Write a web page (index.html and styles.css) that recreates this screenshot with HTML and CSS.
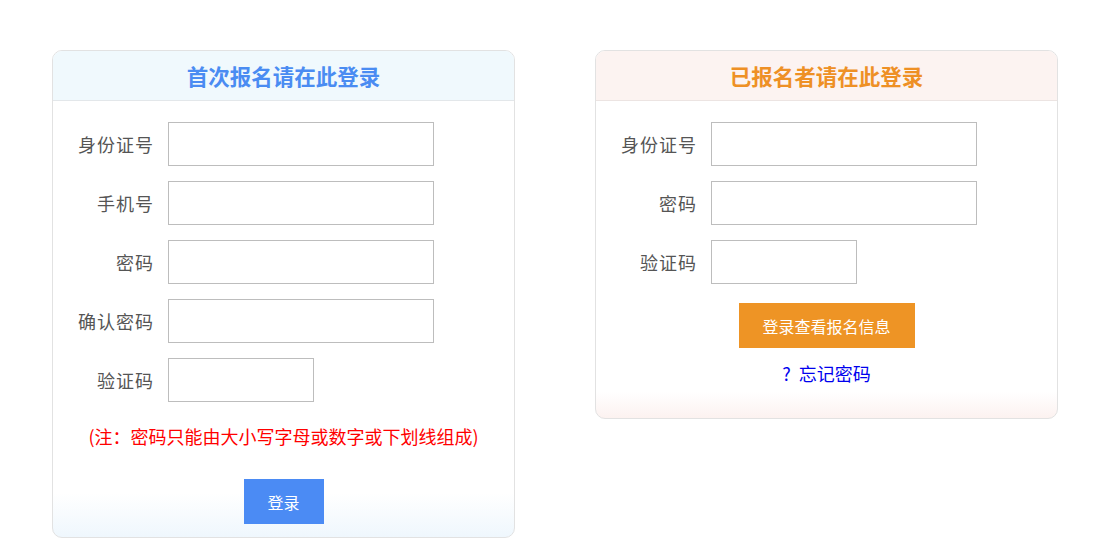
FILE: index.html
```html
<!DOCTYPE html>
<html lang="zh">
<head>
<meta charset="utf-8">
<title>登录</title>
<link rel="stylesheet" href="styles.css">
</head>
<body>
<div class="page">
  <div class="card card-blue">
    <div class="card-head">首次报名请在此登录</div>
    <div class="card-body">
      <div class="row"><label class="lbl">身份证号</label><input class="inp" type="text"></div>
      <div class="row"><label class="lbl">手机号</label><input class="inp" type="text"></div>
      <div class="row"><label class="lbl">密码</label><input class="inp" type="password"></div>
      <div class="row"><label class="lbl">确认密码</label><input class="inp" type="password"></div>
      <div class="row"><label class="lbl">验证码</label><input class="inp inp-short" type="text"></div>
      <p class="note">(注：密码只能由大小写字母或数字或下划线组成)</p>
      <div class="actions"><button class="btn btn-blue">登录</button></div>
    </div>
  </div>
  <div class="card card-orange">
    <div class="card-head">已报名者请在此登录</div>
    <div class="card-body body-right">
      <div class="row"><label class="lbl">身份证号</label><input class="inp" type="text"></div>
      <div class="row"><label class="lbl">密码</label><input class="inp" type="password"></div>
      <div class="row"><label class="lbl">验证码</label><input class="inp inp-short" type="text"></div>
      <div class="actions actions-right"><button class="btn btn-orange">登录查看报名信息</button></div>
      <a class="forgot" href="#">?&nbsp;&nbsp;忘记密码</a>
    </div>
  </div>
</div>
</body>
</html>
```
FILE: styles.css
```css
* { box-sizing: border-box; }
body {
  margin: 0;
  background: #fff;
  font-family: "Microsoft YaHei", "Noto Sans CJK SC", "Noto Sans", sans-serif;
}
.page {
  display: flex;
  align-items: flex-start;
  gap: 80px;
  padding: 50px 0 0 52px;
}
.card {
  width: 463px;
  border: 1px solid #e2e2e2;
  border-radius: 10px;
  overflow: hidden;
}
.card-blue {
  background: linear-gradient(to bottom, #fff 0, #fff calc(100% - 44px), #eff7fd 100%);
}
.card-orange {
  background: linear-gradient(to bottom, #fff 0, #fff calc(100% - 26px), #fcf2f0 100%);
}
.card-head {
  height: 50px;
  line-height: 49px;
  text-align: center;
  font-size: 21.5px;
  font-weight: bold;
  border-bottom: 1px solid #e3e7ea;
}
.card-blue .card-head { background: #f0f9fd; color: #4a8cf2; }
.card-orange .card-head { background: #fcf3f1; color: #ee9025; border-bottom-color: #ece4e2; }
.card-body {
  padding: 21px 0 13px;
  display: flex;
  flex-direction: column;
  gap: 15px;
}
.body-right { padding-bottom: 33px; }
.row {
  display: flex;
  align-items: center;
}
.lbl {
  width: 101px;
  margin-right: 14px;
  text-align: right;
  font-size: 18px;
  color: #555;
  letter-spacing: 1px;
}
.inp {
  width: 266px;
  height: 44px;
  border: 1px solid #bdbdbd;
  background: #fff;
  outline: none;
}
.inp-short { width: 146px; }
.note {
  margin: 7px 0 0;
  text-align: center;
  font-size: 18px;
  line-height: 24px;
  color: #f00;
}
.actions {
  display: flex;
  justify-content: center;
  margin-top: 16px;
}
.actions-right { margin-top: 4px; }
.btn {
  height: 45px;
  border: none;
  color: #fff;
  font-size: 16px;
  font-family: inherit;
  cursor: pointer;
}
.btn-blue { width: 80px; background: #4b8bf4; }
.btn-orange { width: 176px; background: #ee9425; }
.forgot {
  align-self: center;
  margin-top: -2px;
  font-size: 18px;
  line-height: 24px;
  color: #0000ee;
  text-decoration: none;
}
```
